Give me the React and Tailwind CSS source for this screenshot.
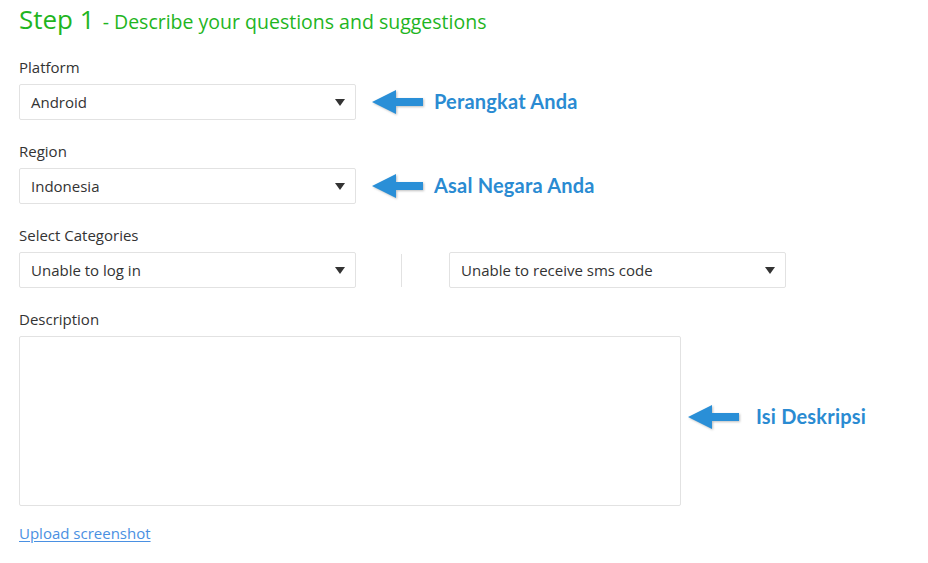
import { useState } from 'react';

const Caret = () => (
  <svg width="10" height="7" viewBox="0 0 10 7" className="shrink-0">
    <path d="M0 0h10L5 7z" fill="#333" />
  </svg>
);

const Arrow = () => (
  <svg width="52" height="28" viewBox="0 0 52 28" className="shrink-0" style={{ filter: 'drop-shadow(1px 1px 1px rgba(0,0,0,0.25))' }}>
    <path d="M0 14L24 2v8h27v8H24v8z" fill="#2a8fd7" />
  </svg>
);

const Note = ({ children }) => (
  <div className="flex items-center gap-[10px]">
    <Arrow />
    <span className="text-[20px] leading-[24px] pb-[3px] font-bold text-[#2a8bd2] font-['Lato',sans-serif] tracking-[0.2px]">{children}</span>
  </div>
);

const Select = ({ value }) => (
  <div className="w-[337px] h-[36px] border border-[#e2e2e2] rounded-[2px] bg-white flex items-center justify-between pl-[11px] pr-[10px]">
    <span className="text-[15px] text-[#333]">{value}</span>
    <Caret />
  </div>
);

const Label = ({ children }) => (
  <div className="text-[15px] leading-[20px] text-[#333] mb-[7px]">{children}</div>
);

export default function App() {
  const [desc, setDesc] = useState('');

  return (
    <div className="w-[928px] h-[563px] bg-white pl-[19px] pt-[3px] font-['Open_Sans',sans-serif] overflow-hidden">
      {/* Title */}
      <h1 className="text-[#1fb51f] leading-[32px] flex items-baseline">
        <span className="text-[26px]">Step 1</span>
        <span className="text-[19.5px] ml-[8px]">- Describe your questions and suggestions</span>
      </h1>

      <div className="mt-[19px]">
        <Label>Platform</Label>
        <div className="flex items-center gap-[16px]">
          <Select value="Android" />
          <Note>Perangkat Anda</Note>
        </div>
      </div>

      <div className="mt-[21px]">
        <Label>Region</Label>
        <div className="flex items-center gap-[16px]">
          <Select value="Indonesia" />
          <Note>Asal Negara Anda</Note>
        </div>
      </div>

      <div className="mt-[21px]">
        <Label>Select Categories</Label>
        <div className="flex items-center">
          <Select value="Unable to log in" />
          <div className="w-px h-[33px] bg-[#e2e2e2] ml-[45px] mr-[47px]" />
          <Select value="Unable to receive sms code" />
        </div>
      </div>

      <div className="mt-[21px]">
        <Label>Description</Label>
        <div className="flex items-center">
          <textarea
            value={desc}
            onChange={(e) => setDesc(e.target.value)}
            className="w-[662px] h-[170px] border border-[#e2e2e2] rounded-[2px] resize-none outline-none p-2 text-[15px]"
          />
          <div className="ml-[7px] mb-[8px]">
            <Note>
              <span className="ml-[6px]">Isi Deskripsi</span>
            </Note>
          </div>
        </div>
      </div>

      <a href="#" className="inline-block mt-[16px] text-[15px] text-[#4a90e2] underline underline-offset-2">
        Upload screenshot
      </a>
    </div>
  );
}
